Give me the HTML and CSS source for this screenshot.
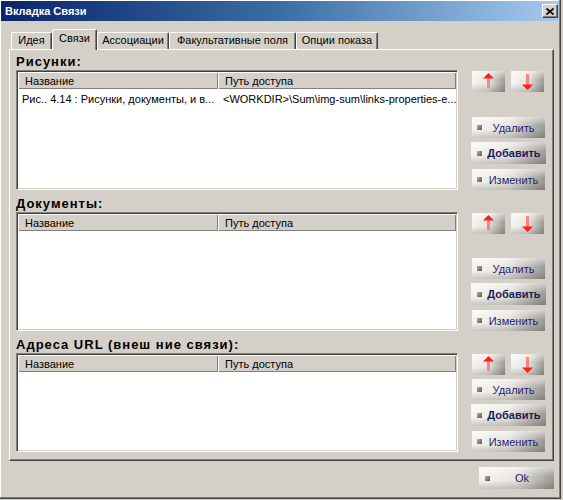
FILE: index.html
```html
<!DOCTYPE html>
<html lang="ru">
<head>
<meta charset="utf-8">
<title>Вкладка Связи</title>
<link rel="stylesheet" href="styles.css">
</head>
<body>
<div class="window">
  <div class="titlebar">
    <span class="title">Вкладка Связи</span>
    <span class="close"><svg width="8" height="7" viewBox="0 0 8 7"><path d="M0.5 0.5 L7.5 6.5 M7.5 0.5 L0.5 6.5" stroke="#000" stroke-width="1.7" fill="none"/></svg></span>
  </div>
  <div class="client">
    <div class="tabs">
      <div class="tab t-idea">Идея</div>
      <div class="tab t-links active">Связи</div>
      <div class="tab t-assoc">Ассоциации</div>
      <div class="tab t-opt">Факультативные поля</div>
      <div class="tab t-show">Опции показа</div>
    </div>
    <div class="panel">
      <section class="sec">
        <div class="sec-title">Рисунки:</div>
        <div class="sec-row row-pics">
          <div class="list">
            <div class="list-head"><div class="hcell c1">Название</div><div class="hcell c2">Путь доступа</div></div>
            <div class="list-row"><div class="cell c1 first">Рис.. 4.14 : Рисунки, документы, и в...</div><div class="cell c2">&lt;WORKDIR&gt;\Sum\img-sum\links-properties-e...</div></div>
          </div>
          <div class="btncol">
            <div class="arrows">
              <div class="btn abtn"><svg width="33" height="21" viewBox="0 0 33 21"><rect x="15" y="7" width="3" height="10" fill="#ff8080"/><polygon points="16.5,2 22,7.5 11,7.5" fill="#ff1e1e"/></svg></div>
              <div class="btn abtn"><svg width="33" height="21" viewBox="0 0 33 21"><rect x="15" y="3" width="3" height="11" fill="#ff8080"/><polygon points="11,13.5 22,13.5 16.5,19" fill="#ff1e1e"/></svg></div>
            </div>
            <div class="actions">
              <div class="btn act"><span class="bul"></span><span class="lbl">Удалить</span></div>
              <div class="btn act def"><span class="bul"></span><span class="lbl">Добавить</span></div>
              <div class="btn act last"><span class="bul"></span><span class="lbl">Изменить</span></div>
            </div>
          </div>
        </div>
      </section>
      <section class="sec">
        <div class="sec-title">Документы:</div>
        <div class="sec-row row-docs">
          <div class="list">
            <div class="list-head"><div class="hcell c1">Название</div><div class="hcell c2">Путь доступа</div></div>
          </div>
          <div class="btncol">
            <div class="arrows">
              <div class="btn abtn"><svg width="33" height="21" viewBox="0 0 33 21"><rect x="15" y="7" width="3" height="10" fill="#ff8080"/><polygon points="16.5,2 22,7.5 11,7.5" fill="#ff1e1e"/></svg></div>
              <div class="btn abtn"><svg width="33" height="21" viewBox="0 0 33 21"><rect x="15" y="3" width="3" height="11" fill="#ff8080"/><polygon points="11,13.5 22,13.5 16.5,19" fill="#ff1e1e"/></svg></div>
            </div>
            <div class="actions">
              <div class="btn act"><span class="bul"></span><span class="lbl">Удалить</span></div>
              <div class="btn act def"><span class="bul"></span><span class="lbl">Добавить</span></div>
              <div class="btn act last"><span class="bul"></span><span class="lbl">Изменить</span></div>
            </div>
          </div>
        </div>
      </section>
      <section class="sec">
        <div class="sec-title">Адреса URL (внеш ние связи):</div>
        <div class="sec-row row-urls">
          <div class="list">
            <div class="list-head"><div class="hcell c1">Название</div><div class="hcell c2">Путь доступа</div></div>
          </div>
          <div class="btncol">
            <div class="arrows">
              <div class="btn abtn"><svg width="33" height="21" viewBox="0 0 33 21"><rect x="15" y="7" width="3" height="10" fill="#ff8080"/><polygon points="16.5,2 22,7.5 11,7.5" fill="#ff1e1e"/></svg></div>
              <div class="btn abtn"><svg width="33" height="21" viewBox="0 0 33 21"><rect x="15" y="3" width="3" height="11" fill="#ff8080"/><polygon points="11,13.5 22,13.5 16.5,19" fill="#ff1e1e"/></svg></div>
            </div>
            <div class="actions">
              <div class="btn act"><span class="bul"></span><span class="lbl">Удалить</span></div>
              <div class="btn act def"><span class="bul"></span><span class="lbl">Добавить</span></div>
              <div class="btn act last"><span class="bul"></span><span class="lbl">Изменить</span></div>
            </div>
          </div>
        </div>
      </section>
    </div>
    <div class="footer">
      <div class="btn okbtn"><span class="bul"></span><span class="lbl">Ok</span></div>
    </div>
  </div>
</div>
</body>
</html>
```

FILE: styles.css
```css
html, body {
  margin: 0;
  padding: 0;
}
body {
  width: 563px;
  height: 500px;
  overflow: hidden;
  background: #d4d0c8;
  font-family: "Liberation Sans", Arial, sans-serif;
  font-size: 11px;
  color: #000;
}
.window {
  box-sizing: border-box;
  width: 561px;
  height: 499px;
  padding: 1px;
  border-right: 1px solid #404040;
  border-bottom: 1px solid #404040;
  box-shadow: inset -1px -1px #808080, inset 1px 1px #ffffff;
  display: flex;
  flex-direction: column;
}
.titlebar {
  box-sizing: border-box;
  height: 20px;
  flex: none;
  display: flex;
  align-items: center;
  justify-content: space-between;
  padding: 0 1px 0 4px;
  background: linear-gradient(to right, #0a246a 0%, #3a6ea5 50%, #a6caf0 100%);
}
.title {
  color: #fff;
  font-weight: bold;
  font-size: 11px;
}
.close {
  box-sizing: border-box;
  width: 16px;
  height: 14px;
  background: #d4d0c8;
  border-top: 1px solid #fff;
  border-left: 1px solid #fff;
  border-right: 1px solid #404040;
  border-bottom: 1px solid #404040;
  box-shadow: inset -1px -1px #808080;
  display: flex;
  align-items: center;
  justify-content: center;
}
.close svg {
  display: block;
}
.client {
  flex: 1;
  padding: 8px 5px 0 8px;
  display: flex;
  flex-direction: column;
}
.tabs {
  height: 20px;
  display: flex;
  align-items: flex-end;
  padding-left: 2px;
  position: relative;
  z-index: 2;
}
.tab {
  box-sizing: border-box;
  height: 17px;
  line-height: 15px;
  text-align: center;
  white-space: nowrap;
  background: #d4d0c8;
  border-top: 1px solid #fff;
  border-left: 1px solid #fff;
  border-right: 1px solid #404040;
  box-shadow: inset -1px 0 #808080;
  border-top-left-radius: 2px;
  border-top-right-radius: 2px;
}
.tab.active {
  height: 21px;
  margin-bottom: -1px;
  padding-top: 1px;
}
.t-idea { width: 41px; }
.t-links { width: 45px; }
.t-assoc { width: 72px; }
.t-opt { width: 127px; }
.t-show { width: 82px; }
.panel {
  box-sizing: border-box;
  width: 545px;
  height: 412px;
  border-top: 1px solid #fff;
  border-left: 1px solid #fff;
  border-right: 1px solid #404040;
  border-bottom: 1px solid #404040;
  box-shadow: inset -1px -1px #808080;
  padding: 3px 7px 8px 6px;
  display: flex;
  flex-direction: column;
  gap: 5px;
  position: relative;
  z-index: 1;
}
.sec-title {
  height: 17px;
  line-height: 17px;
  font-size: 13px;
  font-weight: bold;
  letter-spacing: 1px;
  white-space: nowrap;
}
.sec-row {
  display: flex;
  gap: 13px;
}
.row-pics { height: 120px; }
.row-docs { height: 119px; }
.row-urls { height: 99px; }
.list {
  flex: 1;
  box-sizing: border-box;
  background: #fff;
  border: 1px solid;
  border-color: #808080 #fff #fff #808080;
  box-shadow: inset 1px 1px #404040, inset -1px -1px #d4d0c8;
  padding: 1px;
  overflow: hidden;
}
.list-head {
  display: flex;
  height: 17px;
  background: #d4d0c8;
}
.hcell {
  box-sizing: border-box;
  height: 17px;
  padding: 2px 0 0 7px;
  line-height: 15px;
  box-shadow: inset 1px 1px #fff, inset -1px -1px #808080;
  white-space: nowrap;
}
.c1 { width: 200px; flex: none; }
.c2 { flex: 1; }
.list-row {
  display: flex;
  padding-top: 2px;
  line-height: 16px;
}
.cell {
  box-sizing: border-box;
  padding-left: 5px;
  white-space: nowrap;
  overflow: hidden;
}
.cell.first { padding-left: 4px; }
.btncol {
  width: 75px;
  flex: none;
  display: flex;
  flex-direction: column;
  justify-content: space-between;
}
.arrows {
  display: flex;
  gap: 6px;
  padding-left: 1px;
  margin-top: 1px;
}
.btn {
  box-sizing: border-box;
  display: flex;
  align-items: center;
  color: #1e1e6e;
  background:
    linear-gradient(to bottom, rgba(255,255,255,0.55) 0%, rgba(255,255,255,0) 45%, rgba(0,0,0,0) 60%, rgba(0,0,0,0.18) 100%),
    linear-gradient(to right, #f6f5f1 0%, #e6e4de 50%, #b8b6b0 80%, #9a9893 100%);
  white-space: nowrap;
}
.abtn {
  width: 33px;
  height: 21px;
}
.abtn svg { display: block; }
.actions {
  display: flex;
  flex-direction: column;
}
.act {
  width: 73px;
  height: 21px;
  margin-left: 1px;
  padding-left: 5px;
}
.act.def {
  width: 75px;
  height: 22px;
  margin-left: 0;
  margin-top: 4px;
  padding-left: 6px;
  font-weight: bold;
  color: #1a1a5a;
}
.act.last {
  margin-top: 5px;
}
.bul {
  width: 5px;
  height: 5px;
  flex: none;
  background: linear-gradient(135deg, #b8b0a8 0%, #8a827a 50%, #5e5650 100%);
}
.lbl {
  flex: 1;
  text-align: center;
}
.footer {
  display: flex;
  justify-content: flex-end;
  margin-top: 6px;
}
.okbtn {
  width: 75px;
  height: 22px;
  padding-left: 6px;
  margin-right: 0;
}
```
